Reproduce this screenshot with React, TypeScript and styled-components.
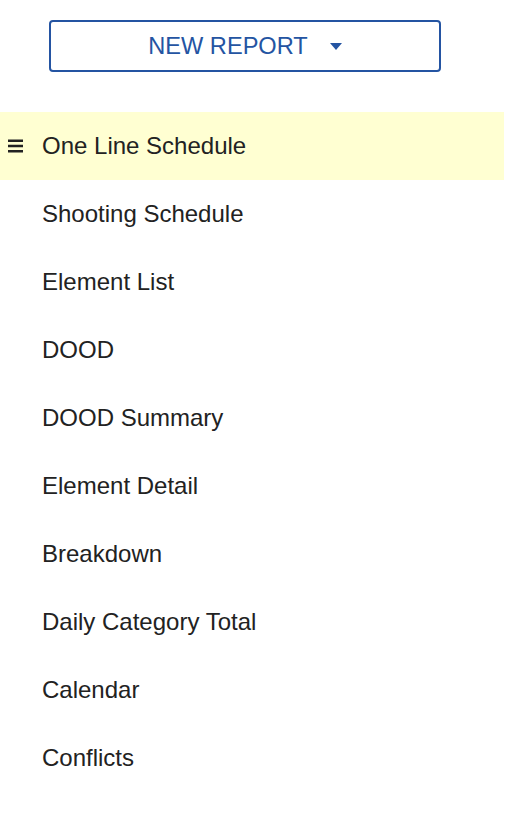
import React from "react";
import styled, { createGlobalStyle } from "styled-components";

const GlobalStyle = createGlobalStyle`
  body {
    margin: 0;
    background: #fff;
    font-family: "Liberation Sans", Arial, sans-serif;
  }
`;

const reports = [
  "One Line Schedule",
  "Shooting Schedule",
  "Element List",
  "DOOD",
  "DOOD Summary",
  "Element Detail",
  "Breakdown",
  "Daily Category Total",
  "Calendar",
  "Conflicts",
];

export default function App() {
  return (
    <>
      <GlobalStyle />
      <StyledPanel>
        <StyledToolbar>
          <StyledNewButton type="button">
            <span>NEW REPORT</span>
            <StyledCaret viewBox="0 0 12 7" aria-hidden="true">
              <path d="M0 0 L12 0 L6 7 Z" fill="currentColor" />
            </StyledCaret>
          </StyledNewButton>
        </StyledToolbar>

        <StyledList>
          {reports.map((name, i) => (
            <StyledRow key={name} $active={i === 0}>
              <StyledHandle>
                {i === 0 && (
                  <svg width="15" height="14" viewBox="0 0 15 14" aria-hidden="true">
                    <rect x="0" y="0.5" width="15" height="2.5" fill="#222" />
                    <rect x="0" y="5.75" width="15" height="2.5" fill="#222" />
                    <rect x="0" y="11" width="15" height="2.5" fill="#222" />
                  </svg>
                )}
              </StyledHandle>
              <span>{name}</span>
            </StyledRow>
          ))}
        </StyledList>
      </StyledPanel>
    </>
  );
}

const StyledPanel = styled.div`
  width: 518px;
  display: flex;
  flex-direction: column;
`;

const StyledToolbar = styled.div`
  padding: 20px 0 0 49px;
  margin-bottom: 40px;
`;

const StyledNewButton = styled.button`
  box-sizing: border-box;
  width: 392px;
  height: 52px;
  display: flex;
  align-items: center;
  justify-content: center;
  gap: 22px;
  padding: 0;
  background: #fff;
  border: 2px solid #2454a2;
  border-radius: 4px;
  color: #2454a2;
  font-family: "Liberation Sans", Arial, sans-serif;
  font-size: 23.6px;
  cursor: pointer;
`;

const StyledCaret = styled.svg`
  width: 12px;
  height: 7px;
  margin-top: 1px;
`;

const StyledList = styled.ul`
  list-style: none;
  margin: 0;
  padding: 0;
`;

const StyledRow = styled.li<{ $active?: boolean }>`
  width: 504px;
  height: 68px;
  display: flex;
  align-items: center;
  background: ${(p) => (p.$active ? "#ffffd2" : "transparent")};
  color: #222;
  font-size: 24px;
`;

const StyledHandle = styled.span`
  width: 42px;
  padding-left: 8px;
  box-sizing: border-box;
  display: flex;
  align-items: center;
`;
